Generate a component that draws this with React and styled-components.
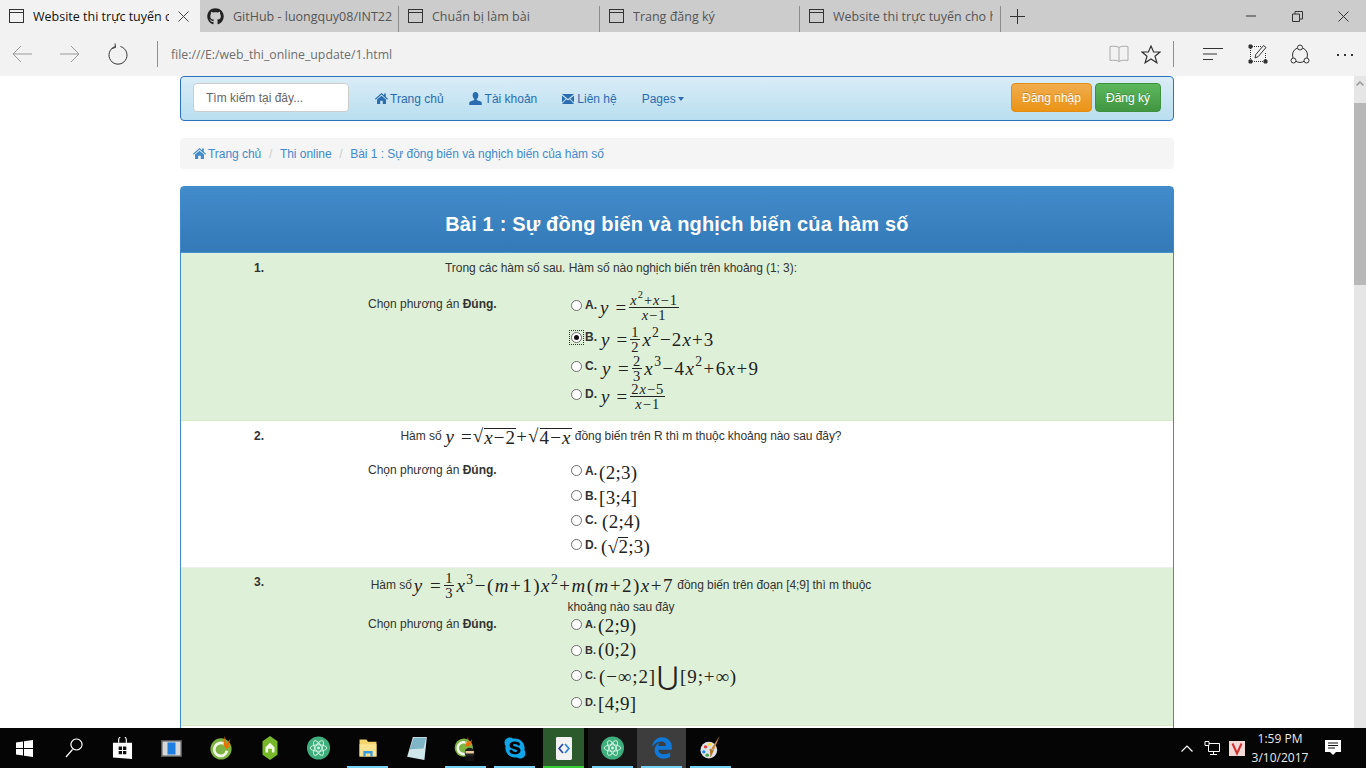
import React from 'react'
import styled, { createGlobalStyle, css } from 'styled-components'
import { FaGithub, FaSkype, FaEdgeLegacy } from 'react-icons/fa'

const Global = createGlobalStyle`
  html, body { margin: 0; padding: 0; height: 100%; overflow: hidden; }
  body { font-family: "Liberation Sans", Arial, sans-serif; font-size: 12px; color: #333; background: #fff; }
  * { box-sizing: border-box; }
`

const Screen = styled.div`
  width: 1366px;
  height: 768px;
  display: flex;
  flex-direction: column;
  overflow: hidden;
`

/* browser chrome */
const TabBar = styled.div`
  height: 32px;
  flex: none;
  display: flex;
  background: #cccccc;
  font-family: "Open Sans", "Noto Sans", sans-serif;
  font-size: 12.5px;
`
const Tab = styled.div`
  width: ${p => p.$w || 200}px;
  height: 32px;
  flex: none;
  display: flex;
  align-items: center;
  padding-left: 9px;
  color: ${p => (p.$active ? '#111' : '#555')};
  background: ${p => (p.$active ? '#f2f2f2' : 'transparent')};
  position: relative;
  ${p => p.$sep && css`
    &::after {
      content: '';
      position: absolute;
      right: 0;
      top: 6px;
      bottom: 0;
      width: 1px;
      background: #8c8c8c;
    }
  `}
`
const TabLabel = styled.span`
  margin-left: 9px;
  width: ${p => p.$w}px;
  overflow: hidden;
  white-space: nowrap;
`
const TabClose = styled.svg`
  margin-left: 9px;
  flex: none;
`
const NewTab = styled.svg`
  margin: 0 0 0 9px;
  align-self: center;
`
const WindowBtns = styled.div`
  margin-left: auto;
  display: flex;
`
const WindowBtn = styled.div`
  width: 46px;
  height: 32px;
  display: flex;
  align-items: center;
  justify-content: center;
`
const Toolbar = styled.div`
  height: 44px;
  flex: none;
  display: flex;
  align-items: center;
  background: #f2f2f2;
`
const ToolBtn = styled.div`
  width: ${p => p.$w || 48}px;
  height: 44px;
  flex: none;
  display: flex;
  align-items: center;
  justify-content: center;
  margin-left: ${p => p.$ml || 0}px;
`
const ToolSep = styled.div`
  width: 1px;
  height: 26px;
  background: #8f8f8f;
  flex: none;
  margin-left: ${p => p.$ml}px;
`
const Address = styled.div`
  flex: 1;
  color: #6e6e6e;
  font-family: "Open Sans", "Noto Sans", sans-serif;
  font-size: 12.3px;
  margin-left: 13px;
`

/* page */
const Viewport = styled.div`
  flex: 1;
  min-height: 0;
  display: flex;
  background: #fff;
`
const Page = styled.div`
  flex: 1;
  min-width: 0;
  overflow: hidden;
`
const Scrollbar = styled.div`
  width: 12px;
  flex: none;
  display: flex;
  flex-direction: column;
  background: #e6e6e6;
`
const ScrollUp = styled.div`
  height: 27px;
  display: flex;
  justify-content: center;
  padding-top: 5px;
`
const ScrollThumb = styled.div`
  height: 182px;
  background: #b8b8b8;
`
const Container = styled.div`
  width: 994px;
  margin: 0 auto;
`
const Navbar = styled.nav`
  height: 45px;
  display: flex;
  align-items: center;
  padding: 0 12px 2px;
  border: 1px solid #2c72bf;
  border-radius: 4px;
  background: linear-gradient(to bottom, #d9edf7, #b9def0);
`
const Search = styled.input`
  width: 156px;
  height: 29px;
  padding: 0 12px;
  margin-right: 26px;
  border: 1px solid #ccc;
  border-radius: 4px;
  background: #fff;
  font: 12px "Liberation Sans", Arial, sans-serif;
  &::placeholder { color: #666; opacity: 1; }
`
const NavItem = styled.a`
  display: flex;
  align-items: center;
  padding-top: 2px;
  color: #2b6cb0;
  margin-right: 25px;
  white-space: nowrap;
  svg { margin-right: ${p => p.$gap ?? 3}px; }
`
const Caret = styled.span`
  width: 0;
  height: 0;
  margin-left: 2px;
  border-top: 4px solid #2b6cb0;
  border-left: 3px solid transparent;
  border-right: 3px solid transparent;
`
const NavActions = styled.div`
  margin-left: auto;
  display: flex;
  gap: 3px;
`
const ActionBtn = styled.button`
  height: 29px;
  padding: 0 10px;
  border-radius: 4px;
  border: 1px solid ${p => (p.$kind === 'orange' ? '#e38d13' : '#3e8f3e')};
  background: ${p => (p.$kind === 'orange'
    ? 'linear-gradient(to bottom, #f0ad4e, #eb9316)'
    : 'linear-gradient(to bottom, #5cb85c, #419641)')};
  color: #fff;
  font: 12px "Liberation Sans", Arial, sans-serif;
  text-shadow: 0 -1px 0 rgba(0, 0, 0, 0.2);
`
const Breadcrumb = styled.div`
  height: 31px;
  margin-top: 17px;
  padding: 0 13px;
  display: flex;
  align-items: center;
  background: #f5f5f5;
  border-radius: 4px;
  color: #428bca;
  letter-spacing: -0.04px;
`
const CrumbLink = styled.a`
  display: flex;
  align-items: center;
  svg { margin-right: 2px; }
`
const CrumbSep = styled.span`
  color: #ccc;
  margin: 0 7.7px;
`
const Panel = styled.div`
  margin-top: 17px;
  border: 1px solid #428bca;
  border-radius: 4px 4px 0 0;
`
const PanelHead = styled.h1`
  height: 66px;
  margin: 0;
  padding-top: 9px;
  display: flex;
  align-items: center;
  justify-content: center;
  color: #fff;
  font-size: 20px;
  font-weight: bold;
  letter-spacing: 0.17px;
  background: linear-gradient(to bottom, #428bca, #337ab7);
  border-bottom: 1px solid #4a90d0;
`
const Question = styled.section`
  height: ${p => p.$h}px;
  display: grid;
  grid-template-columns: 185px 510px;
  background: ${p => (p.$green ? '#dff0d8' : '#fff')};
  border-bottom: 1px solid ${p => (p.$green ? '#d6e9c6' : '#eee')};
  padding-top: ${p => p.$pt}px;
`
const Num = styled.div`
  padding-left: 73px;
  font-weight: bold;
  line-height: 17px;
`
const Body = styled.div`
  display: flex;
  flex-direction: column;
`
const Stem = styled.div`
  text-align: center;
  line-height: ${p => p.$lh || 17}px;
  height: ${p => p.$h}px;
  letter-spacing: -0.06px;
  white-space: nowrap;
`
const AnswerRow = styled.div`
  display: flex;
`
const Prompt = styled.div`
  width: 205px;
  padding-left: 2px;
  flex: none;
  padding-top: ${p => p.$pt || 0}px;
`
const Options = styled.div`
  display: flex;
  flex-direction: column;
  font-size: ${p => p.$fs || 12}px;
`
const Option = styled.label`
  height: ${p => p.$h}px;
  display: flex;
  align-items: center;
  font-weight: bold;
  white-space: nowrap;
`
const Radio = styled.input`
  appearance: none;
  width: 11px;
  height: 11px;
  margin: 0 3px 0 0;
  flex: none;
  border-radius: 50%;
  border: 1px solid #6d6d6d;
  background: #fff;
  position: relative;
  &:checked::after {
    content: '';
    position: absolute;
    inset: 2px;
    border-radius: 50%;
    background: #111;
  }
  ${p => p.$focused && css`
    &::before {
      content: '';
      position: absolute;
      inset: -3px;
      border: 1px dotted #333;
    }
  `}
`
const Formula = styled.span`
  font-family: "Liberation Serif", "DejaVu Serif", serif;
  font-size: 19px;
  font-weight: normal;
  color: #222;
  display: inline-flex;
  align-items: center;
  margin-left: ${p => p.$ml ?? 3}px;
  margin-top: ${p => p.$mt ?? 0}px;
  letter-spacing: ${p => p.$ls ?? 1.1}px;
  vertical-align: middle;
  white-space: nowrap;
  ${p => p.$inline && css`
    height: 17px;
    line-height: 17px;
  `}
`
const V = styled.i`
  font-style: italic;
`
const Frac = styled.span`
  display: inline-flex;
  flex-direction: column;
  align-items: center;
  margin: 0 2px;
  font-size: 14.5px;
  line-height: 12px;
  letter-spacing: 1px;
`
const FracTop = styled.span`
  display: inline-flex;
  justify-content: center;
  align-items: center;
  padding: 0 1px 1px;
  border-bottom: 1px solid #222;
  width: 100%;
`
const FracBottom = styled.span`
  display: inline-flex;
  align-items: center;
  padding-top: 1px;
`
const Sup = styled.span`
  font-size: 0.72em;
  position: relative;
  top: -0.5em;
`
const Root = styled.span`
  display: inline-flex;
  align-items: flex-start;
`
const Radicand = styled.span`
  display: inline-flex;
  border-top: 1px solid #222;
  line-height: 17px;
  margin-top: 1px;
`
const Union = styled.span`
  font-size: 26px;
  line-height: 18px;
  margin: 0 1px;
`

/* taskbar */
const Taskbar = styled.div`
  height: 40px;
  flex: none;
  display: flex;
  align-items: center;
  background: #050505;
  color: #fff;
`
const Slot = styled.div`
  width: 49px;
  height: 40px;
  flex: none;
  display: flex;
  align-items: center;
  justify-content: center;
  position: relative;
  background: ${p => ({ focus: '#2c5a2c', hover: '#3d3d3d', open: '#161616' }[p.$state] || 'transparent')};
  ${p => p.$state === 'focus' && css`
    padding: 0 4px;
    background-clip: content-box;
  `}
  ${p => p.$bar && css`
    &::after {
      content: '';
      position: absolute;
      left: 4px;
      right: 4px;
      bottom: 0;
      height: 2px;
      background: ${p.$state === 'focus' ? '#36d036' : '#76d3f5'};
    }
  `}
`
const Tray = styled.div`
  margin-left: auto;
  display: flex;
  align-items: center;
`
const Clock = styled.div`
  width: 72px;
  margin: 0 1px 0 -2px;
  text-align: center;
  font-family: "Open Sans", "Noto Sans", sans-serif;
  font-size: 12px;
  line-height: 19px;
  color: #e8e8e8;
`
const TrayIcon = styled.div`
  width: ${p => p.$w}px;
  display: flex;
  justify-content: center;
`

const TabIcon = () => (
  <svg width="15" height="14" viewBox="0 0 15 14" fill="none" stroke="#333" style={{ flex: 'none' }}>
    <rect x=".5" y=".5" width="14" height="13" />
    <path d="M.5 3.500h14" />
  </svg>
)
const HomeIcon = ({ c, s = 13 }) => (
  <svg width={s} height={s} viewBox="0 0 14 14" fill={c}>
    <path d="M7 1 0 7.400l.8.9L7 2.800l6.200 5.500.8-.9-2.400-2.200V1.600H9.800v2L7 1Z" />
    <path d="M2.200 8.200 7 4l4.800 4.200V13H8.400V9.400H5.600V13H2.200V8.200Z" />
  </svg>
)
const UserIcon = ({ c }) => (
  <svg width="13" height="13" viewBox="0 0 13 13" fill={c}>
    <path d="M6.500 0C4.700 0 3.600 1.400 3.600 3.200c0 1.500.7 3 1.600 3.700v1L1.200 9.600C.5 10 .2 10.700.2 12v1h12.600v-1c0-1.300-.3-2-1-2.400L7.800 7.900v-1c.9-.7 1.600-2.200 1.600-3.700C9.400 1.400 8.300 0 6.500 0Z" />
  </svg>
)
const MailIcon = ({ c }) => (
  <svg width="12" height="10" viewBox="0 0 12 10" fill={c}>
    <path d="M0 0h12L6 5 0 0Zm0 1.500v7L3.800 4.700 0 1.500Zm12 0L8.200 4.700 12 8.500v-7ZM4.500 5.300 0 10h12L7.500 5.300 6 6.500 4.500 5.300Z" />
  </svg>
)
const Line = ({ w, h, d, c = '#666', sw = 1 }) => (
  <svg width={w} height={h} viewBox={`0 0 ${w} ${h}`} fill="none" stroke={c} strokeWidth={sw}>
    <path d={d} />
  </svg>
)

const CocCoc = () => (
  <svg width="24" height="24" viewBox="0 0 24 26">
    <circle cx="12" cy="14" r="11.500" fill="#7cb342" />
    <path d="M16.500 9.500A7 7 0 1 0 18.500 16" fill="none" stroke="#f1f8e9" strokeWidth="3" />
    <path d="M12 1l3 8 1-9 2 9 4-6-2 8 4-2-6 5-3-4z" fill="#ef6c00" />
  </svg>
)
const Atom = () => (
  <svg width="25" height="24" viewBox="0 0 26 26" fill="none">
    <circle cx="13" cy="13" r="12.500" fill="#3fae7d" />
    <g stroke="#d7f5e6" strokeWidth="1">
      <ellipse cx="13" cy="13" rx="9" ry="3.500" />
      <ellipse cx="13" cy="13" rx="9" ry="3.500" transform="rotate(60 13 13)" />
      <ellipse cx="13" cy="13" rx="9" ry="3.500" transform="rotate(120 13 13)" />
    </g>
    <circle cx="13" cy="13" r="1.600" fill="#d7f5e6" />
  </svg>
)

const slots = [
  {
    icon: (
      <svg width="17" height="17" viewBox="0 0 17 17" fill="#fff">
        <path d="M0 2.500 7 1.500v6.500H0ZM8 1.300 17 0v8H8ZM0 9h7v6.500L0 14.500ZM8 9h9v8l-9-1.300Z" />
      </svg>
    ),
  },
  { icon: <Line w={18} h={20} c="#fff" sw={1.200} d="M11.500 1a5.500 5.500 0 1 1-.01 0ZM7.500 11.500 1 19" /> },
  {
    icon: (
      <svg width="21" height="23" viewBox="0 0 22 24">
        <path d="M1 6h20v17l-20-1.500Z" fill="#fff" />
        <path d="M7 6V3a4 4 0 0 1 8 0v3" fill="none" stroke="#fff" strokeWidth="1.200" />
        <path d="M7 10h3.500v3.500H7ZM11.500 10H15v3.500h-3.500ZM7 14.500h3.500V18H7ZM11.500 14.500H15V18h-3.500Z" fill="#111" />
      </svg>
    ),
  },
  {
    icon: (
      <svg width="21" height="17" viewBox="0 0 21 17">
        <rect width="21" height="17" fill="#555" />
        <rect x="1.500" y="1.500" width="18" height="14" fill="#d8d8d8" />
        <rect x="6.500" y="2.500" width="8" height="12" fill="#1e7fe0" />
      </svg>
    ),
  },
  { icon: <CocCoc /> },
  {
    icon: (
      <svg width="20" height="24" viewBox="0 0 20 32">
        <path d="M10 0 20 7v18l-10 7L0 25V7Z" fill="#76b82a" />
        <path d="M10 9 16 15v7h-3.500v-5h-5v5H4v-7Z" fill="#f2f8e6" />
      </svg>
    ),
  },
  { icon: <Atom /> },
  {
    bar: true,
    icon: (
      <svg width="22" height="20" viewBox="0 0 22 26">
        <path d="M0 2h9l2 3h11v19H0Z" fill="#f3d36b" />
        <path d="M0 8h22v16H0Z" fill="#fbe48f" />
        <path d="M5 24v-7h12v7h-3v-4H8v4Z" fill="#3a9be0" />
      </svg>
    ),
  },
  {
    icon: (
      <svg width="22" height="23" viewBox="0 0 24 28">
        <path d="M7 0h17l-3 28L0 24Z" fill="#cfe6ea" />
        <path d="M8 1h15L20 14 3 15Z" fill="#7fb5c6" />
      </svg>
    ),
  },
  {
    bar: true,
    icon: (
      <svg width="25" height="25" viewBox="0 0 26 30">
        <circle cx="11" cy="14" r="11" fill="#7cb342" />
        <path d="M15.500 9.500A7 7 0 1 0 17.500 16" fill="none" stroke="#f1f8e9" strokeWidth="3" />
        <path d="M12 2l2 7 2-8 1 8 4-5-2 7-5 2z" fill="#ef6c00" />
        <circle cx="18" cy="20" r="6" fill="#222" />
        <rect x="13" y="18" width="10" height="3" fill="#e8c8a0" />
        <path d="M13 24h10v6H13Z" fill="#111" />
      </svg>
    ),
  },
  { bar: true, icon: <FaSkype size={24} color="#10a5e8" /> },
  {
    bar: true,
    state: 'focus',
    icon: (
      <svg width="22" height="23" viewBox="0 0 23 33" fill="none">
        <rect width="23" height="33" rx="2" fill="#f2f2f2" />
        <path d="M10 10 4.500 16.500 10 23" stroke="#2b4aa8" strokeWidth="2.500" />
        <path d="M13 10 18.500 16.500 13 23" stroke="#2f80e0" strokeWidth="2.500" />
      </svg>
    ),
  },
  { bar: true, state: 'open', icon: <Atom /> },
  { bar: true, state: 'hover', icon: <FaEdgeLegacy size={22} color="#0f78d8" /> },
  {
    bar: true,
    icon: (
      <svg width="25" height="25" viewBox="0 0 26 30">
        <ellipse cx="11" cy="17" rx="10" ry="10" fill="#dfe3e8" />
        <circle cx="7" cy="13" r="2" fill="#e53935" />
        <circle cx="12" cy="10" r="2" fill="#fdd835" />
        <circle cx="5" cy="19" r="2" fill="#1e88e5" />
        <circle cx="9" cy="23" r="2" fill="#43a047" />
        <path d="M24 0 17 17l-3-2Z" fill="#c88a3c" />
        <path d="M17 17l-4 9-1-11Z" fill="#b0752c" />
      </svg>
    ),
  },
]

const Prime = () => <>Chọn phương án <b>Đúng.</b></>

const App = () => (
  <Screen>
    <Global />
    <TabBar>
      <Tab $active $w={200}>
        <TabIcon />
        <TabLabel $w={136}>Website thi trực tuyến c</TabLabel>
        <TabClose width="11" height="11" viewBox="0 0 11 11" stroke="#444" fill="none">
          <path d="M.5.5l10 10M10.500.5l-10 10" />
        </TabClose>
      </Tab>
      <Tab $w={199} $sep>
        <FaGithub size={17} color="#222" style={{ flex: 'none', marginLeft: -2 }} />
        <TabLabel $w={159}>GitHub - luongquy08/INT22</TabLabel>
      </Tab>
      <Tab $w={201} $sep>
        <TabIcon />
        <TabLabel $w={160}>Chuẩn bị làm bài</TabLabel>
      </Tab>
      <Tab $w={200} $sep>
        <TabIcon />
        <TabLabel $w={160}>Trang đăng ký</TabLabel>
      </Tab>
      <Tab $w={201} $sep>
        <TabIcon />
        <TabLabel $w={160}>Website thi trực tuyến cho h</TabLabel>
      </Tab>
      <NewTab width="15" height="15" viewBox="0 0 15 15" stroke="#333" fill="none">
        <path d="M7.500 0v15M0 7.500h15" />
      </NewTab>
      <WindowBtns>
        <WindowBtn><Line w={10} h={2} c="#333" d="M0 1h10" /></WindowBtn>
        <WindowBtn><Line w={11} h={11} c="#333" d="M.5 3h7v7.500h-7ZM3 3V.5h7.500V8H8" /></WindowBtn>
        <WindowBtn><Line w={11} h={11} c="#333" d="M.5.5l10 10M10.500.5l-10 10" /></WindowBtn>
      </WindowBtns>
    </TabBar>
    <Toolbar>
      <ToolBtn $ml={-2}><Line w={20} h={18} c="#999" d="M9 1 1 9l8 8M1 9h19" /></ToolBtn>
      <ToolBtn><Line w={20} h={18} c="#999" d="M11 1l8 8-8 8M19 9H0" /></ToolBtn>
      <ToolBtn><Line w={20} h={22} c="#333" d="M7.500 3.500a9 9 0 1 0 5 0M7 .5 7.500 4.500 3.500 5.500" /></ToolBtn>
      <ToolSep $ml={15} />
      <Address>file:///E:/web_thi_online_update/1.html</Address>
      <ToolBtn $w={32}>
        <Line w={20} h={18} c="#aaa" d="M10 2.500C8 1 4 1 1 1.500v14c3-.5 7-.5 9 1 2-1.500 6-1.500 9-1v-14C16 1 12 1 10 2.500Zm0 0v14" />
      </ToolBtn>
      <ToolBtn $w={32}>
        <Line w={20} h={19} c="#333" sw={1.200} d="M10 1l2.600 6h6.400l-5 4.200 1.900 6.600L10 14l-5.900 3.800L6 11.200 1 7h6.400Z" />
      </ToolBtn>
      <ToolSep $ml={6} />
      <ToolBtn $ml={15}><Line w={20} h={14} c="#333" d="M0 1.500h20M0 7h14M0 12.500h10" /></ToolBtn>
      <ToolBtn $ml={-3}>
        <svg width="20" height="20" viewBox="0 0 20 20" fill="none" stroke="#333">
          <path d="M4 2.500h10M2.500 4v12M17.500 9v7M4 17.500h12" strokeDasharray="1 1" />
          <path d="M1 1h3v3H1ZM1 16h3v3H1ZM16 16h3v3h-3Z" fill="#333" />
          <path d="M7 14l.8-3.500L15.500 1.500l2.500 2-7.700 9Z" />
        </svg>
      </ToolBtn>
      <ToolBtn $ml={-6}>
        <svg width="20" height="21" viewBox="0 0 20 21" fill="none" stroke="#333">
          <circle cx="10" cy="11" r="7.500" />
          <circle cx="10" cy="3.500" r="2.500" fill="#f2f2f2" />
          <circle cx="3.500" cy="16.500" r="2.500" fill="#f2f2f2" />
          <circle cx="16.500" cy="16.500" r="2.500" fill="#f2f2f2" />
        </svg>
      </ToolBtn>
      <ToolBtn $w={42}>
        <svg width="16" height="3" viewBox="0 0 16 3" fill="#333">
          <rect width="2" height="2" x="0" y="1" />
          <rect width="2" height="2" x="7" y="1" />
          <rect width="2" height="2" x="14" y="1" />
        </svg>
      </ToolBtn>
    </Toolbar>
    <Viewport>
      <Page>
        <Container>
          <Navbar>
            <Search placeholder="Tìm kiếm tại đây..." />
            <NavItem $gap={2}><HomeIcon c="#2b6cb0" />Trang chủ</NavItem>
            <NavItem><UserIcon c="#2b6cb0" />Tài khoản</NavItem>
            <NavItem><MailIcon c="#2b6cb0" />Liên hệ</NavItem>
            <NavItem>Pages<Caret /></NavItem>
            <NavActions>
              <ActionBtn $kind="orange">Đăng nhập</ActionBtn>
              <ActionBtn $kind="green">Đăng ký</ActionBtn>
            </NavActions>
          </Navbar>
          <Breadcrumb>
            <CrumbLink><HomeIcon c="#428bca" />Trang chủ</CrumbLink>
            <CrumbSep>/</CrumbSep>
            <CrumbLink>Thi online</CrumbLink>
            <CrumbSep>/</CrumbSep>
            <CrumbLink>Bài 1 : Sự đồng biến và nghịch biến của hàm số</CrumbLink>
          </Breadcrumb>
          <Panel>
            <PanelHead>Bài 1 : Sự đồng biến và nghịch biến của hàm số</PanelHead>

            <Question $green $h={168} $pt={7}>
              <Num>1.</Num>
              <Body>
                <Stem $h={30}>Trong các hàm số sau. Hàm số nào nghịch biến trên khoảng (1; 3):</Stem>
                <AnswerRow>
                  <Prompt $pt={7}><Prime /></Prompt>
                  <Options>
                    <Option $h={30}>
                      <Radio type="radio" readOnly />A.
                      <Formula $ml={3} $mt={5}><V>y</V>&nbsp;=<Frac><FracTop><V>x</V><Sup>2</Sup>+<V>x</V>−1</FracTop><FracBottom><V>x</V>−1</FracBottom></Frac></Formula>
                    </Option>
                    <Option $h={34}>
                      <Radio type="radio" readOnly checked $focused />B.
                      <Formula $ml={4} $mt={5}><V>y</V>&nbsp;=<Frac><FracTop>1</FracTop><FracBottom>2</FracBottom></Frac><V>x</V><Sup>2</Sup>−2<V>x</V>+3</Formula>
                    </Option>
                    <Option $h={24}>
                      <Radio type="radio" readOnly />C.
                      <Formula $ml={5} $mt={5} $ls={1.4}><V>y</V>&nbsp;=<Frac><FracTop>2</FracTop><FracBottom>3</FracBottom></Frac><V>x</V><Sup>3</Sup>−4<V>x</V><Sup>2</Sup>+6<V>x</V>+9</Formula>
                    </Option>
                    <Option $h={32}>
                      <Radio type="radio" readOnly />D.
                      <Formula $ml={4} $mt={5}><V>y</V>&nbsp;=<Frac><FracTop>2<V>x</V>−5</FracTop><FracBottom><V>x</V>−1</FracBottom></Frac></Formula>
                    </Option>
                  </Options>
                </AnswerRow>
              </Body>
            </Question>

            <Question $h={147} $pt={7}>
              <Num>2.</Num>
              <Body>
                <Stem $h={30}>
                  Hàm số
                  <Formula $ml={4} $inline><V>y</V>&nbsp;=<Root>√<Radicand><V>x</V>−2</Radicand></Root>+<Root>√<Radicand>4−<V>x</V></Radicand></Root></Formula>
                  {' '}đồng biến trên R thì m thuộc khoảng nào sau đây?
                </Stem>
                <AnswerRow>
                  <Prompt $pt={5}><Prime /></Prompt>
                  <Options>
                    <Option $h={25}><Radio type="radio" readOnly />A.<Formula $ml={2} $mt={4} $ls={0.3}>(2;3)</Formula></Option>
                    <Option $h={25}><Radio type="radio" readOnly />B.<Formula $ml={2} $mt={4} $ls={0.3}>[3;4]</Formula></Option>
                    <Option $h={24}><Radio type="radio" readOnly />C.<Formula $ml={5} $mt={4} $ls={0.3}>(2;4)</Formula></Option>
                    <Option $h={25}><Radio type="radio" readOnly />D.<Formula $ml={4} $mt={4} $ls={0.3}>(<Root>√<Radicand>2</Radicand></Root>;3)</Formula></Option>
                  </Options>
                </AnswerRow>
              </Body>
            </Question>

            <Question $green $h={158} $pt={6}>
              <Num>3.</Num>
              <Body>
                <Stem $h={36} $lh={22}>
                  Hàm số
                  <Formula $ml={2} $ls={1.5} $inline><V>y</V>&nbsp;=<Frac><FracTop>1</FracTop><FracBottom>3</FracBottom></Frac><V>x</V><Sup>3</Sup>−(<V>m</V>+1)<V>x</V><Sup>2</Sup>+<V>m</V>(<V>m</V>+2)<V>x</V>+7</Formula>
                  {' '}đồng biến trên đoạn [4;9] thì m thuộc
                  <br />
                  khoảng nào sau đây
                </Stem>
                <AnswerRow>
                  <Prompt $pt={7}><Prime /></Prompt>
                  <Options $fs={11}>
                    <Option $h={28}><Radio type="radio" readOnly />A.<Formula $ml={2} $mt={4} $ls={0.3}>(2;9)</Formula></Option>
                    <Option $h={24}><Radio type="radio" readOnly />B.<Formula $ml={2} $ls={0.3}>(0;2)</Formula></Option>
                    <Option $h={26}><Radio type="radio" readOnly />C.<Formula $ml={3} $mt={4} $ls={0.9}>(−∞;2]<Union>⋃</Union>[9;+∞)</Formula></Option>
                    <Option $h={28}><Radio type="radio" readOnly />D.<Formula $ml={2} $mt={4} $ls={0.3}>[4;9]</Formula></Option>
                  </Options>
                </AnswerRow>
              </Body>
            </Question>
            <Question $h={60} $pt={0} />
          </Panel>
        </Container>
      </Page>
      <Scrollbar>
        <ScrollUp><Line w={8} h={5} c="#999" sw={1.500} d="M.5 4.500 4 1l3.500 3.500" /></ScrollUp>
        <ScrollThumb />
      </Scrollbar>
    </Viewport>
    <Taskbar>
      {slots.map((s, i) => (
        <Slot key={i} $bar={s.bar} $state={s.state}>{s.icon}</Slot>
      ))}
      <Tray>
        <TrayIcon $w={18}><Line w={12} h={7} c="#fff" sw={1.200} d="M.5 6.500 6 1l5.500 5.500" /></TrayIcon>
        <TrayIcon $w={32}>
          <Line w={16} h={14} c="#fff" d="M1 .5h4v4H1ZM5 2.500h10.500v8H4.500V5M9.500 10.500v3M6 13.500h7" />
        </TrayIcon>
        <TrayIcon $w={18}>
          <svg width="16" height="15" viewBox="0 0 16 15" fill="none">
            <rect width="16" height="15" fill="#f4d9d9" />
            <path d="M3.500 2.500 8 12.500l4.500-10" stroke="#d32f2f" strokeWidth="2" />
          </svg>
        </TrayIcon>
        <Clock>1:59 PM<br />3/10/2017</Clock>
        <TrayIcon $w={32}>
          <svg width="16" height="16" viewBox="0 0 16 16">
            <path d="M0 0h16v12h-5l-3 3-3-3H0Z" fill="#fff" />
            <path d="M3 3h10M3 5.500h10M3 8h7" stroke="#111" />
          </svg>
        </TrayIcon>
        <TrayIcon $w={17} />
      </Tray>
    </Taskbar>
  </Screen>
)

export default App
